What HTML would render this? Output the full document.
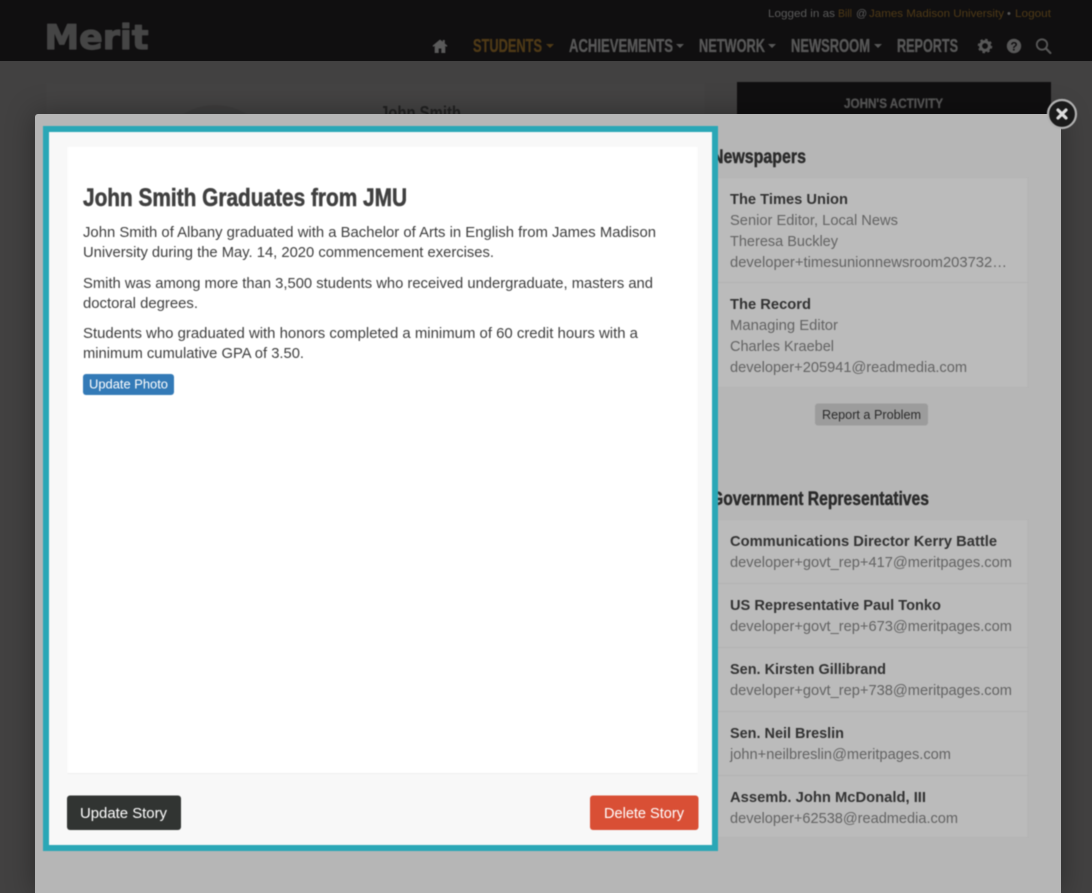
<!DOCTYPE html>
<html lang="en">
<head>
<meta charset="utf-8">
<title>John Smith Graduates from JMU</title>
<style>
html,body{margin:0;padding:0;width:1092px;height:893px;overflow:hidden;background:#424141}
svg{display:block;position:absolute;left:0;top:0}
.bl{filter:blur(.4px)}
text{font-family:"Liberation Sans",Arial,sans-serif;white-space:pre}
.b{font-size:15px;fill:#3e3e3e}
.t{font-size:15px;font-weight:700;fill:#333}
.g{font-size:15px;fill:#636363}
.c{font-weight:700;font-size:18px;fill:#585858;stroke:#585858;stroke-width:.35px}
.h{font-weight:700;font-size:19px;fill:#2a2a2a;stroke:#2a2a2a;stroke-width:.4px}
.top{font-size:11px;fill:#5a5a5a}
.gold{font-size:11px;fill:#4f3a17}
</style>
</head>
<body>
<svg width="1092" height="893" viewBox="0 0 1092 893" xmlns="http://www.w3.org/2000/svg">
  <!-- page behind overlay -->
  <rect width="1092" height="893" fill="#424141"/>
  <rect width="1092" height="61" fill="#100f10"/>
  <g class="bl">
  <rect x="46" y="83" width="659" height="200" fill="#444343"/>
  <circle cx="215" cy="165" r="60" fill="#3f3e3e"/>
  <text x="380" y="119" font-size="18" font-weight="700" fill="#222" textLength="81" lengthAdjust="spacingAndGlyphs">John Smith</text>
  <rect x="737" y="82" width="314" height="40" fill="#100f10"/>
  <text x="844" y="108" class="c" style="font-size:14px" textLength="99" lengthAdjust="spacingAndGlyphs">JOHN'S ACTIVITY</text>

  <!-- header -->
  <text x="44.500" y="49" font-size="34" font-weight="700" fill="#454545" stroke="#454545" stroke-width="1.200" stroke-linejoin="round" style="font-family:'DejaVu Sans',sans-serif" textLength="104" lengthAdjust="spacingAndGlyphs">Merit</text>

  <text x="768" y="17" class="top" textLength="67" lengthAdjust="spacingAndGlyphs">Logged in as</text>
  <text x="838" y="17" class="gold" textLength="14" lengthAdjust="spacingAndGlyphs">Bill</text>
  <text x="856" y="17" class="top">@</text>
  <text x="869" y="17" class="gold" textLength="135" lengthAdjust="spacingAndGlyphs">James Madison University</text>
  <text x="1007" y="17" class="top">•</text>
  <text x="1015" y="17" class="gold" textLength="36" lengthAdjust="spacingAndGlyphs">Logout</text>

  <!-- nav -->
  <path d="M440 39.500l-7.500 6.300 1 1.100 1.200-1V53h4v-4.500h2.600V53h4v-7.100l1.200 1 1-1.100-2.700-2.300V40h-2v1.800z" fill="#5a5a5a"/>
  <text x="473" y="52" class="c" style="fill:#4f3a17;stroke:#4f3a17" textLength="69" lengthAdjust="spacingAndGlyphs">STUDENTS</text>
  <path d="M546 44h8l-4 4z" fill="#4f3a17"/>
  <text x="569" y="52" class="c" textLength="104" lengthAdjust="spacingAndGlyphs">ACHIEVEMENTS</text>
  <path d="M676 44h8l-4 4z" fill="#585858"/>
  <text x="699" y="52" class="c" textLength="66" lengthAdjust="spacingAndGlyphs">NETWORK</text>
  <path d="M768 44h8l-4 4z" fill="#585858"/>
  <text x="791" y="52" class="c" textLength="79" lengthAdjust="spacingAndGlyphs">NEWSROOM</text>
  <path d="M874 44h8l-4 4z" fill="#585858"/>
  <text x="897" y="52" class="c" textLength="61" lengthAdjust="spacingAndGlyphs">REPORTS</text>
  <!-- gear -->
  <circle cx="985" cy="46" r="4.400" fill="none" stroke="#585858" stroke-width="3"/>
  <circle cx="985" cy="46" r="6" fill="none" stroke="#585858" stroke-width="2.600" stroke-dasharray="2.400 2.300"/>
  <!-- question -->
  <circle cx="1014" cy="46" r="7.200" fill="#585858"/>
  <text x="1014" y="50.500" font-size="12" font-weight="700" text-anchor="middle" fill="#100f10">?</text>
  <!-- search -->
  <circle cx="1042" cy="44.500" r="5.200" fill="none" stroke="#585858" stroke-width="1.800"/>
  <path d="M1045.800 48.400l4.600 4.600" stroke="#585858" stroke-width="2.200" stroke-linecap="round"/>
  </g>

  <!-- modal -->
  <path d="M38 114H1061V893H35V117a3 3 0 0 1 3-3z" fill="#b6b6b6" style="filter:drop-shadow(0 0 14px rgba(0,0,0,.35))"/>

  <g class="bl">
  <!-- newspapers -->
  <text x="712" y="163" class="h" textLength="94" lengthAdjust="spacingAndGlyphs">Newspapers</text>
  <rect x="700" y="177.500" width="328" height="210" fill="#bbb" stroke="#b3b3b3"/>
  <path d="M700 282.500H1028" stroke="#b3b3b3"/>
  <text x="730" y="204" class="t" textLength="118" lengthAdjust="spacingAndGlyphs">The Times Union</text>
  <text x="730" y="225" class="g" textLength="168" lengthAdjust="spacingAndGlyphs">Senior Editor, Local News</text>
  <text x="730" y="246" class="g" textLength="108" lengthAdjust="spacingAndGlyphs">Theresa Buckley</text>
  <text x="730" y="267" class="g" textLength="277" lengthAdjust="spacingAndGlyphs">developer+timesunionnewsroom203732…</text>
  <text x="730" y="309" class="t" textLength="81" lengthAdjust="spacingAndGlyphs">The Record</text>
  <text x="730" y="330" class="g" textLength="108" lengthAdjust="spacingAndGlyphs">Managing Editor</text>
  <text x="730" y="351" class="g" textLength="104" lengthAdjust="spacingAndGlyphs">Charles Kraebel</text>
  <text x="730" y="372" class="g" textLength="237" lengthAdjust="spacingAndGlyphs">developer+205941@readmedia.com</text>
  <rect x="815" y="403.500" width="113" height="22" rx="3" fill="#9c9c9c"/>
  <text x="822" y="419" font-size="13" fill="#2b2b2b" textLength="99" lengthAdjust="spacingAndGlyphs">Report a Problem</text>

  <!-- government -->
  <text x="711" y="505" class="h" textLength="218" lengthAdjust="spacingAndGlyphs">Government Representatives</text>
  <rect x="700" y="519.500" width="328" height="318" fill="#bbb" stroke="#b3b3b3"/>
  <path d="M700 583.500H1028M700 647.500H1028M700 711.500H1028M700 775.500H1028" stroke="#b3b3b3"/>
  <text x="730" y="546" class="t" textLength="267" lengthAdjust="spacingAndGlyphs">Communications Director Kerry Battle</text>
  <text x="730" y="567" class="g" textLength="282" lengthAdjust="spacingAndGlyphs">developer+govt_rep+417@meritpages.com</text>
  <text x="730" y="610" class="t" textLength="211" lengthAdjust="spacingAndGlyphs">US Representative Paul Tonko</text>
  <text x="730" y="631" class="g" textLength="282" lengthAdjust="spacingAndGlyphs">developer+govt_rep+673@meritpages.com</text>
  <text x="730" y="674" class="t" textLength="156" lengthAdjust="spacingAndGlyphs">Sen. Kirsten Gillibrand</text>
  <text x="730" y="695" class="g" textLength="282" lengthAdjust="spacingAndGlyphs">developer+govt_rep+738@meritpages.com</text>
  <text x="730" y="738" class="t" textLength="114" lengthAdjust="spacingAndGlyphs">Sen. Neil Breslin</text>
  <text x="730" y="759" class="g" textLength="221" lengthAdjust="spacingAndGlyphs">john+neilbreslin@meritpages.com</text>
  <text x="730" y="802" class="t" textLength="196" lengthAdjust="spacingAndGlyphs">Assemb. John McDonald, III</text>
  <text x="730" y="823" class="g" textLength="228" lengthAdjust="spacingAndGlyphs">developer+62538@readmedia.com</text>

  <!-- teal highlighted panel -->
  <rect x="46" y="129" width="669" height="719" fill="#f8f8f8" stroke="#2aa7b6" stroke-width="6"/>
  <rect x="67.500" y="147" width="630" height="626" fill="#fff"/>
  <path d="M67.500 773.500H697.500" stroke="#eee"/>

  <text x="83" y="206" font-size="25" font-weight="700" fill="#404040" stroke="#404040" stroke-width=".5" textLength="324" lengthAdjust="spacingAndGlyphs">John Smith Graduates from JMU</text>
  <text x="83" y="237" class="b" textLength="573" lengthAdjust="spacingAndGlyphs">John Smith of Albany graduated with a Bachelor of Arts in English from James Madison</text>
  <text x="83" y="257" class="b" textLength="411" lengthAdjust="spacingAndGlyphs">University during the May. 14, 2020 commencement exercises.</text>
  <text x="83" y="288" class="b" textLength="570" lengthAdjust="spacingAndGlyphs">Smith was among more than 3,500 students who received undergraduate, masters and</text>
  <text x="83" y="308" class="b" textLength="115" lengthAdjust="spacingAndGlyphs">doctoral degrees.</text>
  <text x="83" y="338" class="b" textLength="555" lengthAdjust="spacingAndGlyphs">Students who graduated with honors completed a minimum of 60 credit hours with a</text>
  <text x="83" y="358" class="b" textLength="221" lengthAdjust="spacingAndGlyphs">minimum cumulative GPA of 3.50.</text>

  <rect x="83" y="374" width="91" height="21" rx="3" fill="#337ab7"/>
  <text x="89" y="388.500" font-size="13" fill="#fff" textLength="79" lengthAdjust="spacingAndGlyphs">Update Photo</text>

  <rect x="67" y="795.500" width="114" height="34.500" rx="3" fill="#313432"/>
  <text x="80" y="818" font-size="15" fill="#fff" textLength="87" lengthAdjust="spacingAndGlyphs">Update Story</text>
  <rect x="590" y="795.500" width="108.500" height="34.500" rx="3" fill="#d94f35"/>
  <text x="604" y="818" font-size="15" fill="#fff" textLength="80" lengthAdjust="spacingAndGlyphs">Delete Story</text>

  <!-- close -->
  <circle cx="1062" cy="114" r="14" fill="#1a1a1a" stroke="#b0b0b0" stroke-width="2.200"/>
  <path d="M1058 110l8 8m0-8l-8 8" stroke="#dcdcdc" stroke-width="3.200" stroke-linecap="round"/>
  </g>
</svg>
</body>
</html>
